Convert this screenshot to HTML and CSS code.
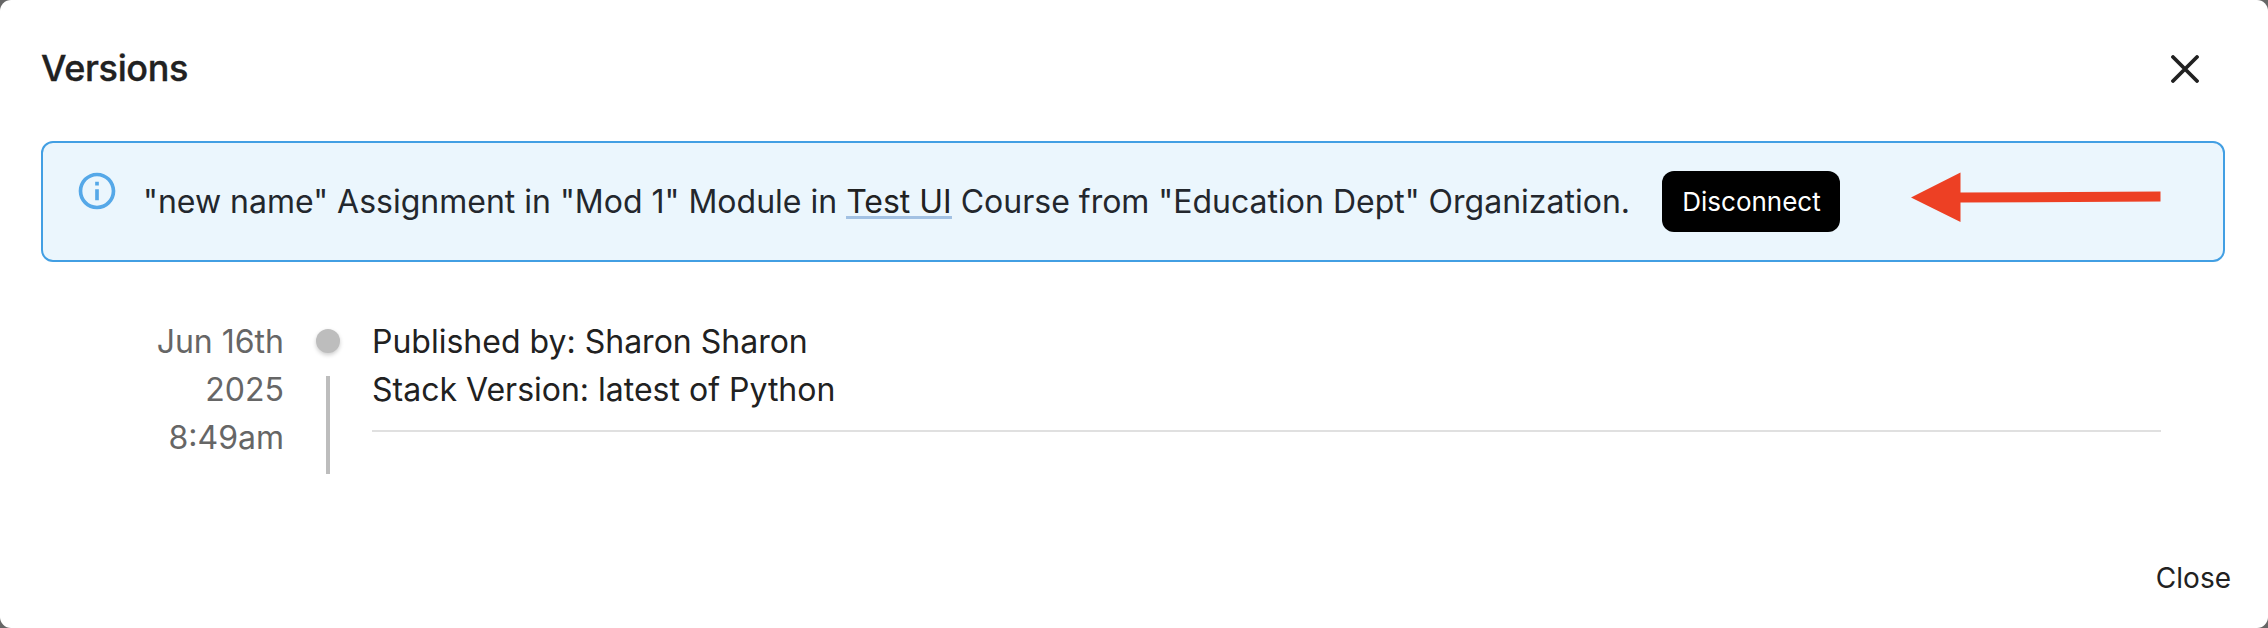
FILE: index.html
```html
<!DOCTYPE html>
<html lang="en">
<head>
<meta charset="utf-8">
<title>Versions</title>
<link rel="stylesheet" href="styles.css">
</head>
<body>
<main class="dialog">
  <header class="header">
    <h1 class="title">Versions</h1>
    <svg class="close-icon" width="28" height="28" viewBox="0 0 28 28"><path d="M2 2 26 26M26 2 2 26"/></svg>
  </header>
  <section class="alert">
    <svg class="info-icon" width="44" height="44" viewBox="0 0 24 24"><path d="M11 7h2v2h-2zm0 4h2v6h-2zm1-9C6.48 2 2 6.48 2 12s4.480 10 10 10 10-4.480 10-10S17.520 2 12 2zm0 18c-4.410 0-8-3.590-8-8s3.590-8 8-8 8 3.590 8 8-3.590 8-8 8z"/></svg>
    <p class="message">"new name" Assignment in "Mod 1" Module in <a class="course">Test UI</a> Course from "Education Dept" Organization.</p>
    <button class="disconnect">Disconnect</button>
    <svg class="arrow" width="250" height="50" viewBox="0 0 250 50"><path d="M0 25.500 49.500 0.500V20.500L249.500 19.500V29.500L49.500 30.500V50z"/></svg>
  </section>
  <section class="timeline">
    <div class="date">Jun 16th<br>2025<br>8:49am</div>
    <div class="separator"><span class="dot"></span><span class="connector"></span></div>
    <div class="details">
      <p>Published by: Sharon Sharon</p>
      <p>Stack Version: latest of Python</p>
    </div>
  </section>
  <footer class="footer"><button class="close">Close</button></footer>
</main>
</body>
</html>
```
FILE: styles.css
```css
* { box-sizing: border-box; }
body { margin: 0; background: #666; font-family: Inter, "Liberation Sans", sans-serif; }
h1, p { margin: 0; }
button { border: 0; background: none; font-family: inherit; }
.dialog { width: 2268px; height: 628px; display: flex; flex-direction: column; overflow: hidden; background: #fff; border-radius: 11px; color: #212121; }
.header { height: 141px; flex: none; display: flex; justify-content: space-between; align-items: flex-start; padding: 40px 69px 0 41px; }
.title { font-size: 36px; line-height: 56px; font-weight: 500; letter-spacing: -.35px; -webkit-text-stroke: .35px #212121; }
.close-icon { margin-top: 15px; fill: none; stroke: #212121; stroke-width: 3.8; stroke-linecap: round; }
.alert { height: 121px; flex: none; margin: 0 43px 0 41px; padding: 0 62px 0 32px; display: flex; align-items: flex-start; border: 2px solid #429fe3; border-radius: 12px; background: #ebf6fd; color: #23272d; }
.info-icon { flex: none; margin-top: 26px; fill: #55a8e8; }
.message { margin: 35px 0 0 24px; width: 1519px; flex: none; font-size: 32px; line-height: 48px; letter-spacing: 0; white-space: nowrap; }
.course { color: #212121; border-bottom: 3px solid #a2c1e3; line-height: 1; display: inline-block; height: 33px; }
.disconnect { flex: none; width: 178px; height: 61px; margin-top: 28px; padding: 0 0 0 1px; border-radius: 12px; background: #000; color: #fff; font-size: 26px; letter-spacing: 0; }
.arrow { flex: none; margin: 29px 0 0 71px; fill: #ed4024; }
.timeline { height: 156px; flex: none; margin-top: 56px; padding-right: 107px; display: flex; font-size: 32px; line-height: 48px; }
.date { width: 284px; text-align: right; color: #666; }
.separator { width: 88px; display: flex; flex-direction: column; align-items: center; padding-top: 11px; }
.dot { width: 24px; height: 24px; border-radius: 50%; background: #bdbdbd; box-shadow: 0 2px 4px rgba(0,0,0,.2); }
.connector { width: 4px; height: 98px; margin-top: 23px; background: #bdbdbd; }
.details { flex: 1; height: 114px; border-bottom: 2px solid #e0e0e0; }
.footer { display: flex; justify-content: flex-end; padding: 82px 37px 0 0; }
.close { padding: 0; color: #212121; font-size: 28px; line-height: 44px; letter-spacing: 0; }
```
